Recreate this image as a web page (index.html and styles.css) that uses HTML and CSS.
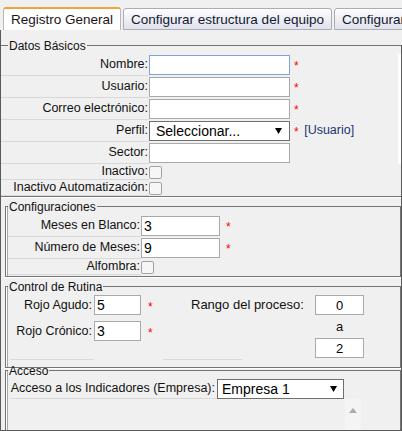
FILE: index.html
```html
<!DOCTYPE html>
<html lang="es">
<head>
<meta charset="utf-8">
<title>Registro General</title>
<link rel="stylesheet" href="styles.css">
</head>
<body>
<div class="panel">
  <div class="tabs">
    <div class="tab active">Registro General</div>
    <div class="tab">Configurar estructura del equipo</div>
    <div class="tab">Configurar indicadores</div>
  </div>
  <div class="content">
    <fieldset class="fs fs-basic">
      <legend>Datos Básicos</legend>
      <table class="form basic">
        <tr class="edge">
          <td class="lbl">Nombre:</td>
          <td class="fld"><input class="txt focus" type="text"></td>
          <td class="req"><span class="star">*</span></td>
        </tr>
        <tr class="edge">
          <td class="lbl">Usuario:</td>
          <td class="fld"><input class="txt" type="text"></td>
          <td class="req"><span class="star">*</span></td>
        </tr>
        <tr class="edge">
          <td class="lbl">Correo electrónico:</td>
          <td class="fld"><input class="txt" type="text"></td>
          <td class="req"><span class="star">*</span></td>
        </tr>
        <tr class="edge">
          <td class="lbl">Perfil:</td>
          <td class="fld">
            <div class="sel"><span>Seleccionar...</span><svg class="caret" width="7" height="6" viewBox="0 0 7 6"><path d="M0 0H7L3.5 6Z"/></svg></div>
          </td>
          <td class="req"><span class="star">*</span> <span class="role">[Usuario]</span></td>
        </tr>
        <tr class="edge">
          <td class="lbl">Sector:</td>
          <td class="fld"><input class="txt" type="text"></td>
          <td class="req"></td>
        </tr>
        <tr>
          <td class="lbl">Inactivo:</td>
          <td class="fld chk"><input class="cb" type="checkbox"></td>
          <td class="req"></td>
        </tr>
        <tr>
          <td class="lbl">Inactivo Automatización:</td>
          <td class="fld chk"><input class="cb" type="checkbox"></td>
          <td class="req"></td>
        </tr>
      </table>
    </fieldset>

    <fieldset class="fs fs-conf">
      <legend>Configuraciones</legend>
      <table class="form conf">
        <tr>
          <td class="lbl">Meses en Blanco:</td>
          <td class="fld"><input class="txt" type="text" value="3"></td>
          <td class="req"><span class="star">*</span></td>
        </tr>
        <tr>
          <td class="lbl">Número de Meses:</td>
          <td class="fld"><input class="txt" type="text" value="9"></td>
          <td class="req"><span class="star">*</span></td>
        </tr>
        <tr>
          <td class="lbl">Alfombra:</td>
          <td class="fld chk"><input class="cb" type="checkbox"></td>
          <td class="req"></td>
        </tr>
      </table>
    </fieldset>

    <fieldset class="fs fs-rutina">
      <legend>Control de Rutina</legend>
      <div class="rutina">
        <table class="form rojo">
          <tr>
            <td class="lbl">Rojo Agudo:</td>
            <td class="fld"><input class="txt" type="text" value="5"></td>
            <td class="req"><span class="star">*</span></td>
          </tr>
          <tr>
            <td class="lbl">Rojo Crónico:</td>
            <td class="fld"><input class="txt" type="text" value="3"></td>
            <td class="req"><span class="star">*</span></td>
          </tr>
          <tr class="tail">
            <td class="lbl"></td>
            <td class="fld"></td>
            <td class="req"></td>
          </tr>
        </table>
        <div class="rango">
          <span class="rango-lbl">Rango del proceso:</span>
          <input class="txt mini r1" type="text" value="0">
          <span class="rango-a">a</span>
          <input class="txt mini r2" type="text" value="2">
          <span class="rango-line"></span>
        </div>
      </div>
    </fieldset>

    <fieldset class="fs fs-acc">
      <legend>Acceso</legend>
      <table class="form acc">
        <tr>
          <td class="lbl">Acceso a los Indicadores (Empresa):</td>
          <td class="fld">
            <div class="sel sel-emp"><span>Empresa 1</span><svg class="caret" width="7" height="6" viewBox="0 0 7 6"><path d="M0 0H7L3.5 6Z"/></svg></div>
          </td>
        </tr>
      </table>
      <div class="totop"><svg width="8" height="5" viewBox="0 0 8 5"><path d="M0 5H8L4 0Z"/></svg></div>
    </fieldset>
  </div>
</div>
</body>
</html>
```

FILE: styles.css
```css
* {
  box-sizing: border-box;
}

html,
body {
  margin: 0;
  padding: 0;
  background: #f0f0f0;
}

body {
  font-family: "Liberation Sans", Arial, sans-serif;
  color: #111;
}

.panel {
  width: 402px;
  height: 431px;
  overflow: hidden;
  background: #f0f0f0;
}

/* ---------- tabs ---------- */
.tabs {
  display: flex;
  align-items: flex-end;
  gap: 2px;
  height: 30px;
  padding-left: 3px;
  white-space: nowrap;
}

.tab {
  flex: none;
  display: flex;
  align-items: center;
  height: 22px;
  padding: 0 7px;
  font-size: 13.5px;
  color: #101a33;
  border: 1px solid #a9adbb;
  border-radius: 3px 3px 0 0;
  background: linear-gradient(#fdfdfe, #e1e2eb);
}

.tab.active {
  height: 23px;
  background: #fff;
  color: #1a1414;
  border-color: #b8b8b8;
  border-top: 2px solid #f2a23a;
  border-bottom: 0;
}

/* ---------- content ---------- */
.content {
  height: 401px;
  overflow: hidden;
  padding: 6px 1px 0 0;
  border-left: 1px solid #5a5a5a;
  border-bottom: 1px solid #5a5a5a;
  background: linear-gradient(#5a5a5a, #5a5a5a) right 0 top 15px / 1px 100% no-repeat, #f0f0f0;
}

.fs {
  margin: 0 0 0 4px;
  padding: 0;
  min-width: 0;
  border: 1px solid #747474;
  box-shadow: 0 1px 0 #fff, inset 1px 0 0 #fff, inset 2px 0 0 #a8a8a8;
}

.fs legend {
  margin-left: 2px;
  padding: 3px 1px 0;
  font-size: 12px;
  line-height: 15px;
  color: #111;
}

.fs-basic {
  margin-left: 0;
  border-left: 0;
  border-right: 0;
  box-shadow: 0 1px 0 #fff;
}

.fs-basic legend {
  margin-left: 7px;
}

.fs-conf {
  padding-bottom: 1px;
}

.fs-rutina {
  padding-bottom: 7px;
}

.fs-acc {
  margin-top: -7px;
}

/* ---------- form tables ---------- */
.form {
  border-collapse: separate;
  border-spacing: 0;
  table-layout: fixed;
  font-size: 12.5px;
  line-height: 15px;
}

.form td {
  padding: 0;
  vertical-align: middle;
}

.form td.lbl {
  text-align: right;
  white-space: nowrap;
  padding-right: 1px;
  border-bottom: 1px solid #d9d9d9;
}

.form td.fld {
  padding: 1px 0;
}

.form td.fld.chk {
  padding: 0;
}

.form td.req {
  padding-left: 4px;
  white-space: nowrap;
}

.star {
  color: #f00;
  font-size: 12px;
  vertical-align: -2px;
}

.role {
  margin-left: 2px;
  color: #1b3570;
}

.basic {
  width: 100%;
}

.basic td.lbl {
  width: 148px;
}

.basic td.fld {
  width: 141px;
}

.basic .edge td.req {
  box-shadow: inset -3px 0 0 #fff;
}

.conf {
  width: 242px;
  margin: 0 0 0 2px;
}

.conf td.lbl {
  width: 133px;
}

.conf td.fld {
  width: 79px;
}

.conf td.req {
  padding-left: 6px;
}

/* inputs */
.txt {
  display: block;
  width: 100%;
  height: 20px;
  margin: 0;
  padding: 0 2px;
  border: 1px solid #a9a9a9;
  background: #fff;
  font: 14px "Liberation Sans", Arial, sans-serif;
  color: #000;
  outline: none;
}

.txt.focus {
  border-color: #7da4d6;
}

.cb {
  appearance: none;
  display: block;
  width: 13px;
  height: 13px;
  margin: 0;
  border: 1px solid #a4a4a4;
  border-radius: 2px;
  background: #f6f6f6;
}

.sel {
  display: flex;
  align-items: center;
  justify-content: space-between;
  width: 100%;
  height: 20px;
  padding: 0 7px 0 6px;
  border: 1px solid #6f6f6f;
  background: #fff;
  font-size: 14px;
  color: #000;
}

.sel-emp {
  padding: 0 6px 0 4px;
}

.caret {
  fill: #000;
  flex: none;
}

/* ---------- control de rutina ---------- */
.rutina {
  display: flex;
  align-items: flex-start;
}

.rojo {
  width: 153px;
  margin-left: 4px;
  flex: none;
}

.rojo td.lbl {
  width: 84px;
  padding-right: 2px;
  border-bottom: 0;
  vertical-align: top;
  line-height: 20px;
}

.rojo td.fld {
  width: 47px;
  padding: 0 0 6px;
  vertical-align: top;
}

.rojo td.req {
  vertical-align: top;
  line-height: 20px;
  padding-left: 7px;
}

.rojo .tail td {
  height: 13px;
  padding: 0;
}

.rojo .tail td.lbl {
  border-bottom: 1px solid #d9d9d9;
}

.rango {
  display: grid;
  grid-template-columns: 152px 49px;
  grid-template-rows: 20px 23px 20px auto;
  font-size: 13px;
  color: #111;
}

.rango-lbl {
  grid-row: 1;
  grid-column: 1;
  padding-left: 28px;
  line-height: 20px;
  white-space: nowrap;
}

.mini {
  text-align: center;
  font-size: 13px;
}

.r1 {
  grid-row: 1;
  grid-column: 2;
}

.rango-a {
  grid-row: 2;
  grid-column: 2;
  text-align: center;
  line-height: 23px;
}

.r2 {
  grid-row: 3;
  grid-column: 2;
}

.rango-line {
  grid-row: 4;
  grid-column: 1;
  width: 79px;
  margin-top: 1px;
  border-top: 1px solid #d9d9d9;
}

/* ---------- acceso ---------- */
.acc {
  width: 334px;
  margin: 0 0 0 4px;
}

.acc td.lbl {
  width: 207px;
  padding-right: 2px;
}

.acc td.fld {
  width: 127px;
  padding: 0;
}

.totop {
  width: 16px;
  height: 40px;
  margin-left: 339px;
  padding-top: 9px;
  display: flex;
  justify-content: center;
  align-items: flex-start;
  background: #f4f4f4;
}

.totop svg {
  fill: #ababab;
}
```
